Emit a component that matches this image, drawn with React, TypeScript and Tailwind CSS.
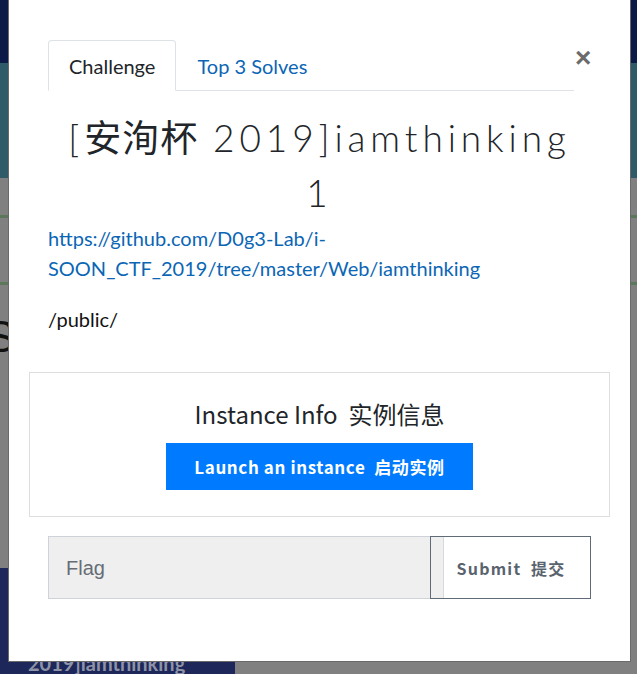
import { useState } from 'react';

const tabs = ['Challenge', 'Top 3 Solves'];

export default function App() {
    const [active, setActive] = useState(0);

    return (
        <div className="relative w-[637px] h-[674px] overflow-hidden bg-[#808080] font-['Lato',sans-serif]">

            {/* dimmed page behind the modal */}
            <div className="flex flex-col h-full">
                <div className="h-[63px] bg-[#0c1a47]"></div>
                <div className="h-[115px] bg-[#2f5a68]"></div>
                <div className="flex-1 flex flex-col bg-[#808080]">
                    <div className="h-[37px]"></div>
                    <div className="h-[3px] bg-[#5b785b]"></div>
                    <div className="h-[64px]"></div>
                    <div className="h-[3px] bg-[#5b785b]"></div>
                    <div className="-ml-[14px] pt-[26px] text-[44px] leading-[52px] text-[#111] font-['Liberation_Sans',sans-serif]">
                        <p>S</p>
                        <p>I</p>
                        <p className="mt-[40px] text-[30px]">:</p>
                    </div>
                </div>
                <div className="h-[106px] flex">
                    <div className="w-[235px] bg-[#1d2759] pt-[80px] pl-[28px] text-[20px] font-bold text-[#8e93a8]">
                        2019]iamthinking
                    </div>
                    <div className="flex-1 bg-[#808080]"></div>
                </div>
            </div>

            {/* modal */}
            <div className="absolute left-[8px] top-[-1px] w-[623px] h-[663px] bg-white border border-[#6a6a6a] border-t-0 px-[39px] pt-[41px]">

                <div className="flex items-end">
                    <ul className="flex flex-1 border-b border-[#dee2e6]">
                        {tabs.map((tab, index) => (
                            <li key={index}
                                onClick={() => setActive(index)}
                                className={index === active
                                    ? 'h-[51px] -mb-px px-5 flex items-center rounded-t border border-[#dee2e6] border-b-white bg-white text-[20px] text-[#212529] cursor-pointer'
                                    : 'h-[51px] -mb-px px-5 flex items-center border border-transparent text-[20px] text-[#0b66b5] cursor-pointer'}>
                                {tab}
                            </li>
                        ))}
                    </ul>
                    <button className="self-start mt-[4px] ml-[1px] w-[16px] text-[28px] leading-[28px] font-bold text-[#6b6b6b] font-['Liberation_Sans',sans-serif]">×</button>
                </div>

                <h3 className="mt-[18px] px-[10px] text-center text-[37px] leading-[55px] font-light tracking-[4.9px] text-[#212529] font-['Lato','Noto_Sans_CJK_SC',sans-serif]">
                    [<span className="font-normal tracking-[1px] font-['Noto_Sans_CJK_SC',sans-serif]">安洵杯</span> 2019]iamthinking 1
                </h3>

                <p className="mt-[3px] text-[20px] leading-[30px]">
                    <a className="text-[#0b66b5]">https://github.com/D0g3-Lab/i-SOON_CTF_2019/tree/master/Web/iamthinking</a>
                </p>
                <p className="mt-[21px] text-[20px] leading-[30px] text-[#111]">/public/</p>

                <div className="mt-[38px] -mx-[19px] h-[145px] border border-[#dedede] flex flex-col items-center pt-[24px] font-['Noto_Sans_CJK_SC',sans-serif]">
                    <h4 className="text-[24px] leading-[33px] text-[#212529]">Instance Info&nbsp; 实例信息</h4>
                    <button className="mt-[13px] w-[307px] h-[47px] bg-[#007bff] text-white text-[17px] font-bold tracking-[0.6px]">
                        Launch an instance&nbsp; 启动实例
                    </button>
                </div>

                <div className="mt-[19px] flex h-[63px]">
                    <input placeholder="Flag"
                        className="flex-1 min-w-0 bg-[#efefef] border border-[#cfd3d9] border-r-0 px-[17px] text-[20px] text-[#333] placeholder-[#666d75] outline-none font-['Liberation_Sans',sans-serif]" />
                    <div className="w-[161px] flex border border-[#5f6b77]">
                        <div className="w-[13px] bg-[#efefef] border-r border-[#d6d9dd]"></div>
                        <button className="flex-1 pr-[12px] text-[16px] font-bold tracking-[1.2px] text-[#59636d] font-['Noto_Sans_CJK_SC',sans-serif]">
                            Submit&nbsp; 提交
                        </button>
                    </div>
                </div>

            </div>
        </div>
    );
}
